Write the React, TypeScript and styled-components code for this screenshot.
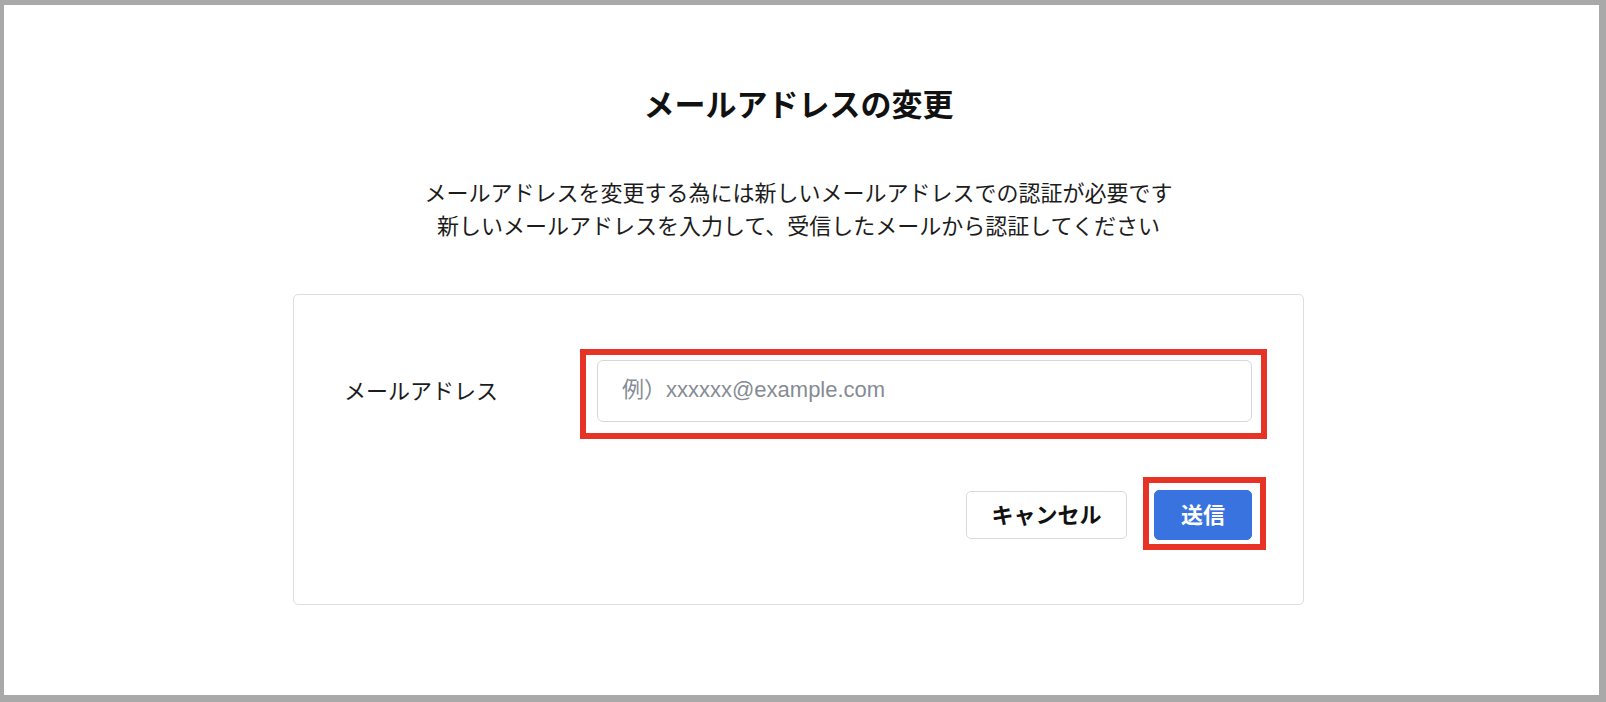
import styled, { createGlobalStyle } from 'styled-components';

const GlobalStyle = createGlobalStyle`
  html, body {
    margin: 0;
    padding: 0;
    background: #ffffff;
  }
  body {
    font-family: "Liberation Sans", "Noto Sans CJK JP", sans-serif;
    color: #111;
  }
  * {
    box-sizing: border-box;
  }
`;

const Frame = styled.div`
  height: 702px;
  border-style: solid;
  border-color: #a9a9a9;
  border-width: 5px 7px 7px 4px;
  padding: 77px 6px 0 0;
  display: flex;
  flex-direction: column;
  align-items: center;
`;

const Title = styled.h1`
  margin: 0;
  font-size: 31px;
  line-height: 48px;
  font-weight: 700;
  color: #111;
`;

const Lead = styled.p`
  margin: 47px 0 0;
  font-size: 22px;
  line-height: 33px;
  text-align: center;
  color: #1c1c1c;
`;

const Card = styled.section`
  width: 1011px;
  margin-top: 51px;
  border: 1px solid #dcdfe2;
  border-radius: 5px;
  padding: 65px 51px 64px 50px;
`;

const FieldRow = styled.div`
  display: flex;
  align-items: center;
`;

const Label = styled.label`
  flex: 0 0 253px;
  font-size: 22px;
  padding-bottom: 5px;
  color: #1c1c1c;
`;

// red annotation drawn over the marked parts
const Marked = styled.div<{ $inset: string }>`
  position: relative;
  display: flex;

  &::after {
    content: '';
    position: absolute;
    inset: ${(p) => p.$inset};
    border: 6px solid #e63326;
    pointer-events: none;
  }
`;

const InputMark = styled(Marked)`
  flex: 1;
`;

const TextInput = styled.input`
  flex: 1;
  height: 62px;
  border: 1px solid #d5d8dc;
  border-radius: 6px;
  padding: 0 24px 3px;
  font-family: "Liberation Sans", "Noto Sans CJK JP", sans-serif;
  font-size: 22px;
  color: #222;
  outline: none;

  &::placeholder {
    color: #868b94;
  }
`;

const Actions = styled.div`
  display: flex;
  justify-content: flex-end;
  align-items: center;
  gap: 27px;
  margin-top: 68px;
`;

const Button = styled.button<{ $primary?: boolean }>`
  height: ${(p) => (p.$primary ? '50px' : '48px')};
  width: ${(p) => (p.$primary ? '98px' : '161px')};
  border-radius: 5px;
  border: 1px solid ${(p) => (p.$primary ? '#3873e0' : '#d7dadd')};
  background: ${(p) => (p.$primary ? '#3873e0' : '#ffffff')};
  color: ${(p) => (p.$primary ? '#ffffff' : '#111111')};
  font-family: "Liberation Sans", "Noto Sans CJK JP", sans-serif;
  font-size: 22px;
  font-weight: 700;
  padding: 0 0 4px;
  cursor: pointer;
`;

export default function App() {
  return (
    <>
      <GlobalStyle />
      <Frame>
        <Title>メールアドレスの変更</Title>
        <Lead>
          メールアドレスを変更する為には新しいメールアドレスでの認証が必要です
          <br />
          新しいメールアドレスを入力して、受信したメールから認証してください
        </Lead>
        <Card>
          <FieldRow>
            <Label htmlFor="email">メールアドレス</Label>
            <InputMark $inset="-11px -15px -17px -17px">
              <TextInput id="email" type="email" placeholder="例）xxxxxx@example.com" />
            </InputMark>
          </FieldRow>
          <Actions>
            <Button type="button">キャンセル</Button>
            <Marked $inset="-13px -14px -10px -11px">
              <Button type="submit" $primary>送信</Button>
            </Marked>
          </Actions>
        </Card>
      </Frame>
    </>
  );
}
